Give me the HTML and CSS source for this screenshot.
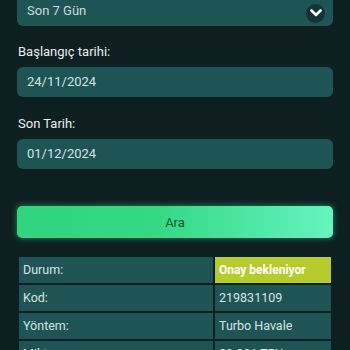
FILE: index.html
```html
<!DOCTYPE html>
<html lang="tr">
<head>
    <meta charset="UTF-8">
    <meta name="viewport" content="width=device-width, initial-scale=1.0">
    <title>İşlem Geçmişi</title>
    <link rel="stylesheet" href="styles.css">
</head>
<body>

<div class="container">
    <div class="select-box">
        <span>Son 7 Gün</span>
        <span class="chevron">
            <svg width="12" height="8" viewBox="0 0 12 8"><path d="M1.5 1.5 L6 6 L10.5 1.5" fill="none" stroke="#fff" stroke-width="2.6" stroke-linecap="round" stroke-linejoin="round"/></svg>
        </span>
    </div>

    <label class="field-label">Başlangıç tarihi:</label>
    <div class="date-input">24/11/2024</div>

    <label class="field-label second">Son Tarih:</label>
    <div class="date-input">01/12/2024</div>

    <button class="search-btn">Ara</button>

    <div class="info-table">
        <div class="cell">Durum:</div>
        <div class="cell status">Onay bekleniyor</div>
        <div class="cell">Kod:</div>
        <div class="cell">219831109</div>
        <div class="cell">Yöntem:</div>
        <div class="cell">Turbo Havale</div>
        <div class="cell">Miktar:</div>
        <div class="cell">20.001 TRY</div>
    </div>
</div>

</body>
</html>
```

FILE: styles.css
```css
body {
    margin: 0;
    padding: 0;
    background-color: #0e1f21;
    font-family: Roboto, "Noto Sans", Arial, sans-serif;
    color: #e6eeee;
    overflow: hidden;
}
.container {
    padding: 0 17px;
}
.select-box {
    margin-top: -6px;
    height: 32px;
    background-color: #1f5455;
    border-radius: 6px;
    display: flex;
    align-items: center;
    justify-content: space-between;
    padding: 0 8px 0 10px;
    font-size: 13px;
    color: #c9dcdc;
}
.chevron {
    width: 19px;
    height: 19px;
    border-radius: 50%;
    background-color: #133337;
    display: flex;
    align-items: center;
    justify-content: center;
    margin-top: 6px;
}
.field-label {
    display: block;
    font-size: 13px;
    line-height: 16px;
    margin: 18px 1px 7px;
    color: #e8efef;
}
.field-label.second {
    margin-top: 19px;
}
.date-input {
    height: 30px;
    line-height: 30px;
    background-color: #1f5455;
    border-radius: 6px;
    padding-left: 10px;
    font-size: 13px;
    color: #d3e3e3;
}
.search-btn {
    display: block;
    width: 100%;
    height: 32px;
    margin-top: 37px;
    border: none;
    border-radius: 5px;
    background: linear-gradient(90deg, #2fd47d 0%, #36d885 45%, #52eaab 80%, #66f4bf 100%);
    box-shadow: 0 0 6px rgba(60, 220, 140, 0.55);
    color: #0c5a31;
    font-family: Roboto, "Noto Sans", Arial, sans-serif;
    font-size: 13px;
}
.info-table {
    margin: 19px 2px 0;
    display: grid;
    grid-template-columns: 194px 1fr;
    grid-auto-rows: 26px;
    gap: 2px;
}
.cell {
    background-color: #1f5455;
    font-size: 12.5px;
    line-height: 26px;
    padding-left: 4px;
    color: #d6e4e4;
}
.cell.status {
    background-color: #b6cc2d;
    color: #ffffff;
    font-weight: bold;
    font-size: 12px;
}
```
